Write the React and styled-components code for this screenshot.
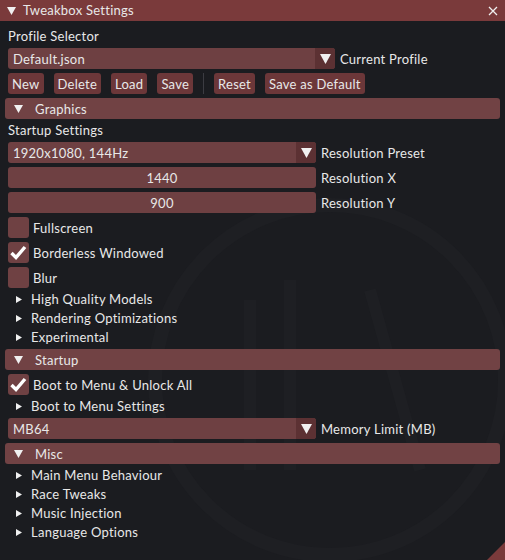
import React from 'react';
import styled, { createGlobalStyle } from 'styled-components';

const GlobalStyle = createGlobalStyle`
  html, body {
    margin: 0;
    padding: 0;
    background: #1b1c20;
  }
  * {
    box-sizing: border-box;
  }
`;

const Window = styled.div`
  background: #1b1c20;
  color: #e8e8e8;
  font-family: Lato, "Noto Sans", sans-serif;
  font-size: 13px;
  letter-spacing: 0.25px;
  height: 560px;
  overflow: hidden;
  position: relative;
  width: 505px;
`;

const Watermark = styled.svg`
  left: 0;
  pointer-events: none;
  position: absolute;
  top: 0;
`;

const TitleBar = styled.div`
  align-items: center;
  background: #7a3a3b;
  display: flex;
  height: 21px;
  padding: 0 7px;
  position: relative;
`;

const TitleText = styled.span`
  flex: 1;
  line-height: 21px;
  margin-left: 7px;
`;

const Body = styled.div`
  display: flex;
  flex-direction: column;
  gap: 4px;
  padding: 8px;
  position: relative;
`;

const TextLine = styled.div`
  height: 15px;
  line-height: 15px;
`;

const Row = styled.div`
  align-items: center;
  display: flex;
  gap: ${props => props.gap || 5}px;
  height: 21px;
`;

const Frame = styled.div`
  align-items: center;
  background: #6e4042;
  border-radius: 3px;
  display: flex;
  height: 21px;
  justify-content: ${props => props.center ? 'center' : 'flex-start'};
  overflow: hidden;
  width: ${props => props.width}px;
`;

const FrameText = styled.span`
  flex: 1;
  padding-left: ${props => props.center ? 0 : 5}px;
  text-align: ${props => props.center ? 'center' : 'left'};
`;

const ArrowBox = styled.div`
  align-items: center;
  background: #5c3133;
  display: flex;
  height: 100%;
  justify-content: center;
  width: 20px;
`;

const Button = styled.div`
  align-items: center;
  background: #6c3739;
  border-radius: 3px;
  display: flex;
  height: 21px;
  padding: 0 4px;
`;

const Separator = styled.div`
  align-self: stretch;
  background: #3c3c42;
  width: 1px;
`;

const Header = styled.div`
  align-items: center;
  background: #714244;
  border-radius: 3px;
  display: flex;
  gap: 12px;
  height: 21px;
  margin: 0 -3px;
  padding-left: 9px;
`;

const CheckRow = styled.div`
  align-items: center;
  display: flex;
  gap: 4px;
  height: 21px;
`;

const Box = styled.div`
  align-items: center;
  background: #6f4143;
  border-radius: 3px;
  display: flex;
  height: 21px;
  justify-content: center;
  width: 21px;
`;

const TreeNode = styled.div`
  align-items: center;
  display: flex;
  gap: 9px;
  height: 15px;
  line-height: 15px;
  padding-left: 8px;
`;

const Grip = styled.svg`
  bottom: 0;
  position: absolute;
  right: 0;
`;

const DownTri = ({ w = 9, h = 8 }) => (
  <svg width={w} height={h} viewBox={`0 0 ${w} ${h}`}>
    <polygon points={`0,0 ${w},0 ${w / 2},${h}`} fill="#f0f0f0" />
  </svg>
);

const RightTri = () => (
  <svg width="6" height="7" viewBox="0 0 6 7">
    <polygon points="0,0 6,3.5 0,7" fill="#f0f0f0" />
  </svg>
);

const CloseIcon = () => (
  <svg width="10" height="10" viewBox="0 0 10 10">
    <path d="M1 1 L9 9 M9 1 L1 9" stroke="#f0f0f0" strokeWidth="1.3" />
  </svg>
);

const Check = () => (
  <svg width="21" height="21" viewBox="0 0 21 21">
    <polyline points="3.5,11 8,15.5 17,5" fill="none" stroke="#ffffff" strokeWidth="3.4" />
  </svg>
);

function Combo({ value, width, label }) {
  return (
    <Row>
      <Frame width={width}>
        <FrameText>{value}</FrameText>
        <ArrowBox><DownTri w={11} h={10} /></ArrowBox>
      </Frame>
      <span>{label}</span>
    </Row>
  );
}

function Input({ value, label }) {
  return (
    <Row>
      <Frame width={308} center>
        <FrameText center>{value}</FrameText>
      </Frame>
      <span>{label}</span>
    </Row>
  );
}

function Checkbox({ checked, label }) {
  return (
    <CheckRow>
      <Box>{checked && <Check />}</Box>
      <span>{label}</span>
    </CheckRow>
  );
}

function Section({ title }) {
  return (
    <Header>
      <DownTri />
      <span>{title}</span>
    </Header>
  );
}

function Node({ label }) {
  return (
    <TreeNode>
      <RightTri />
      <span>{label}</span>
    </TreeNode>
  );
}

export default function App() {
  return (
    <>
      <GlobalStyle />
      <Window>
        <Watermark width="505" height="560" viewBox="0 0 505 560">
          <circle cx="330" cy="380" r="175" fill="none" stroke="#1e1f23" strokeWidth="14" />
          <path d="M250 300 L250 470 M290 280 L290 470 M370 290 L420 470" stroke="#1e1f23" strokeWidth="12" fill="none" />
        </Watermark>
        <TitleBar>
          <DownTri />
          <TitleText>Tweakbox Settings</TitleText>
          <CloseIcon />
        </TitleBar>
        <Body>
          <TextLine>Profile Selector</TextLine>
          <Combo value="Default.json" width={327} label="Current Profile" />
          <Row gap={10}>
            <Button>New</Button>
            <Button>Delete</Button>
            <Button>Load</Button>
            <Button>Save</Button>
            <Separator />
            <Button>Reset</Button>
            <Button>Save as Default</Button>
          </Row>
          <Section title="Graphics" />
          <TextLine>Startup Settings</TextLine>
          <Combo value="1920x1080, 144Hz" width={308} label="Resolution Preset" />
          <Input value="1440" label="Resolution X" />
          <Input value="900" label="Resolution Y" />
          <Checkbox label="Fullscreen" />
          <Checkbox checked label="Borderless Windowed" />
          <Checkbox label="Blur" />
          <Node label="High Quality Models" />
          <Node label="Rendering Optimizations" />
          <Node label="Experimental" />
          <Section title="Startup" />
          <Checkbox checked label="Boot to Menu & Unlock All" />
          <Node label="Boot to Menu Settings" />
          <Combo value="MB64" width={308} label="Memory Limit (MB)" />
          <Section title="Misc" />
          <Node label="Main Menu Behaviour" />
          <Node label="Race Tweaks" />
          <Node label="Music Injection" />
          <Node label="Language Options" />
        </Body>
        <Grip width="18" height="18" viewBox="0 0 18 18">
          <polygon points="18,0 18,18 0,18" fill="#7a3a3b" />
        </Grip>
      </Window>
    </>
  );
}
